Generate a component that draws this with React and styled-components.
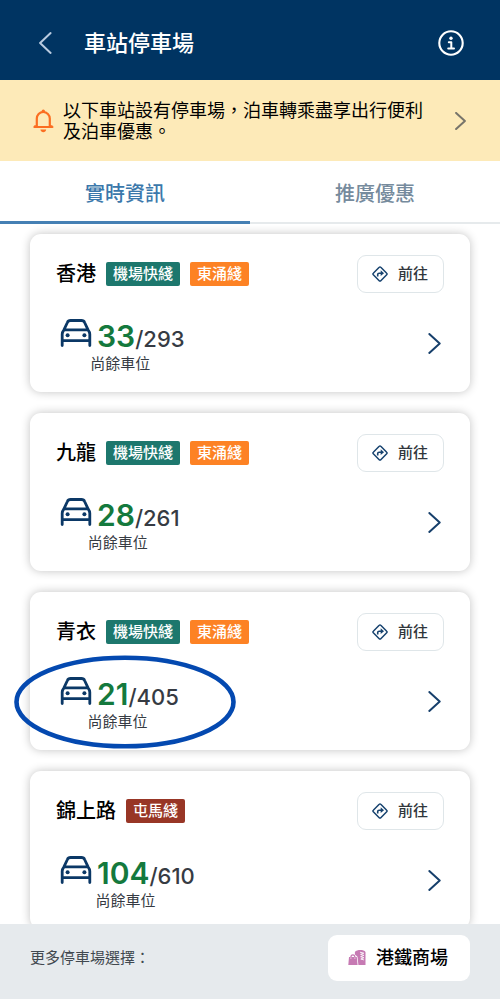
import React from "react";
import styled, { createGlobalStyle } from "styled-components";

const GlobalStyle = createGlobalStyle`
  *, *::before, *::after { box-sizing: border-box; }
  body {
    margin: 0;
    background: #ffffff;
    color: #000000;
    font-family: Inter, "Noto Sans CJK TC", sans-serif;
  }
  button {
    font: inherit;
    color: inherit;
    border: 0;
    background: none;
    padding: 0;
    margin: 0;
    cursor: pointer;
  }
  svg { display: block; flex: none; }
`;

const Screen = styled.div`
  height: 100vh;
  display: flex;
  flex-direction: column;
  overflow: hidden;
`;

const Header = styled.header`
  flex: none;
  display: flex;
  align-items: center;
  height: 80px;
  padding: 6px 36px 0 38px;
  background: #003462;
  color: #ffffff;
`;

const Title = styled.h1`
  flex: 1;
  margin: 0 0 0 32px;
  font-size: 22px;
  line-height: 32px;
  font-weight: 500;
`;

const IconButton = styled.button`
  display: grid;
  place-items: center;
`;

const DetailButton = styled(IconButton)`
  height: 48px;
`;

const Notice = styled.button`
  && {
    flex: none;
    display: flex;
    align-items: center;
    gap: 8px;
    height: 81px;
    padding: 0 34px 0 32px;
    background: #fdeab8;
    text-align: left;
  }
`;

const NoticeText = styled.span`
  flex: 1;
  font-size: 18px;
  line-height: 21px;
  white-space: pre-line;
`;

const Tabs = styled.div`
  flex: none;
  display: grid;
  grid-template-columns: 1fr 1fr;
  height: 63px;
`;

const Tab = styled.button`
  && {
    padding-top: 5px;
    font-size: 20px;
    line-height: 28px;
    font-weight: 500;
    color: ${(p) => (p.$active ? "#3b78ab" : "#768b9d")};
    border-bottom: ${(p) => (p.$active ? "3px solid #4580b4" : "2px solid #e6eaec")};
  }
`;

const List = styled.main`
  flex: 1;
  min-height: 0;
  display: flex;
  flex-direction: column;
  gap: 21px;
  padding: 10px 30px 0;
  overflow: hidden;
`;

const Card = styled.article`
  position: relative;
  flex: none;
  padding: 21px 26px 20px;
  border-radius: 11px;
  background: #ffffff;
  box-shadow: 0 0 10px rgba(0, 0, 0, 0.24);
`;

const CardHead = styled.div`
  display: flex;
  align-items: center;
  gap: 10px;
`;

const Station = styled.h2`
  margin: 0;
  font-size: 20px;
  line-height: 28px;
  font-weight: 500;
`;

const LineBadge = styled.span`
  height: 24px;
  padding: 0 7px;
  border-radius: 2px;
  background: ${(p) => p.$color};
  color: #ffffff;
  font-size: 15px;
  line-height: 24px;
  font-weight: 500;
`;

const GoButton = styled.button`
  && {
    display: flex;
    align-items: center;
    gap: 10px;
    height: 38px;
    margin-left: auto;
    padding: 0 15px 0 14px;
    border: 1px solid #dfe6e9;
    border-radius: 9px;
    color: #30363c;
    font-size: 15px;
    line-height: 20px;
    font-weight: 500;
  }
`;

const CardBody = styled.div`
  display: flex;
  align-items: flex-start;
  justify-content: space-between;
  margin-top: 26px;
  padding-right: 3px;
`;

const Availability = styled.div`
  display: flex;
  flex-direction: column;
  align-items: center;
  color: #363b43;
`;

const CountRow = styled.div`
  display: flex;
  align-items: baseline;
  padding-left: 4px;
  line-height: 34px;
`;

const CarIcon = styled.svg`
  margin-right: 5px;
`;

const Free = styled.strong`
  color: #14793d;
  font-size: 30px;
  font-weight: 600;
`;

const Total = styled.span`
  font-size: 22px;
  font-weight: 500;
`;

const CountLabel = styled.span`
  font-size: 15px;
  line-height: 16px;
`;

const Highlight = styled.svg`
  position: absolute;
  z-index: 1;
  left: -16px;
  top: 63px;
  pointer-events: none;
`;

const Footer = styled.footer`
  flex: none;
  display: flex;
  align-items: center;
  justify-content: space-between;
  height: 75px;
  padding: 0 30px 8px;
  background: #e6eaed;
  color: #41484f;
  font-size: 15px;
  line-height: 20px;
`;

const MallButton = styled.button`
  && {
    display: flex;
    align-items: center;
    gap: 10px;
    height: 46px;
    padding: 0 22px 0 20px;
    border-radius: 9px;
    background: #ffffff;
    color: #000000;
    font-size: 18px;
    font-weight: 500;
  }
`;

const Chevron = ({ width, height, color, stroke = 2, left = false }) => (
  <svg width={width} height={height} viewBox="0 0 10 20" preserveAspectRatio="none" fill="none" aria-hidden="true">
    <path
      d={left ? "M9 1 1.5 10 9 19" : "M1 1 9 10 1 19"}
      stroke={color}
      strokeWidth={stroke}
      strokeLinecap="round"
      strokeLinejoin="round"
      vectorEffect="non-scaling-stroke"
    />
  </svg>
);

const InfoIcon = () => (
  <svg width="26" height="26" viewBox="0 0 26 26" fill="none" aria-hidden="true">
    <circle cx="13" cy="13" r="11.7" stroke="#fff" strokeWidth="2.1" />
    <circle cx="13" cy="8.2" r="1.7" fill="#fff" />
    <path d="M10.8 12.2h2.5v6M10.2 18.4h5.8" stroke="#fff" strokeWidth="2" strokeLinecap="round" strokeLinejoin="round" />
  </svg>
);

const BellIcon = () => (
  <svg width="23" height="24" viewBox="0 0 23 24" fill="none" aria-hidden="true">
    <path d="M3 17.3h1.8V9.6c0-3.7 2.7-6.6 6.4-6.6s6.6 2.9 6.6 6.6v7.7h1.9M2.4 18h18" stroke="#fb6e21" strokeWidth="2.2" strokeLinecap="round" strokeLinejoin="round" />
    <circle cx="11.3" cy="2.2" r="1.7" fill="#fb6e21" />
    <path d="M8.4 20.4h5.8c-.3 1.8-1.5 2.8-2.9 2.8s-2.6-1-2.9-2.8Z" fill="#fb6e21" />
  </svg>
);

const Car = () => (
  <CarIcon width="32" height="28" viewBox="0 0 32 28" fill="none" aria-hidden="true">
    <path
      d="M2.2 26.5V15.2c0-1.6.6-2.7 1.6-4L7.400 3.500C8 2 9 1.500 10.500 1.500h11c1.500 0 2.500.5 3.100 2l3.600 7.700c1 1.300 1.600 2.400 1.600 4v11.300M2.600 21.600h26.800M4 10.900h24"
      stroke="#0b3866"
      strokeWidth="2.8"
      strokeLinecap="round"
      strokeLinejoin="round"
    />
    <circle cx="7.6" cy="16.200" r="2" fill="#0b3866" />
    <circle cx="24.4" cy="16.200" r="2" fill="#0b3866" />
  </CarIcon>
);

const DirectionIcon = () => (
  <svg width="16" height="16" viewBox="0 0 16 16" fill="none" aria-hidden="true">
    <path d="M7.2 1.3a1.1 1.1 0 0 1 1.6 0l5.9 5.9a1.1 1.1 0 0 1 0 1.6l-5.9 5.9a1.1 1.1 0 0 1-1.6 0L1.3 8.8a1.1 1.1 0 0 1 0-1.6Z" stroke="#17436f" strokeWidth="1.5" />
    <path d="M5.7 10.4V8.6c0-.9.5-1.4 1.4-1.4h2.4" stroke="#17436f" strokeWidth="1.6" />
    <path d="M8.7 4.3 12 7.2 8.7 10.1Z" fill="#17436f" />
  </svg>
);

const MallIcon = () => (
  <svg width="18" height="17" viewBox="0 0 18 17" fill="none" aria-hidden="true">
    <path d="M6.9 3C7.8 1.5 10.3 1 12.4 1s4.3.6 5.1 1.900V16H10.400L9.500 7.800 6.900 5.600Z" fill="#c67ab3" />
    <path d="M12 3.200l3.800 1-3.200 1.200 3.300 1-3.300 1.300 3.300 1-3.100 1.300 3.100.9" stroke="#fff" strokeWidth=".9" />
    <path d="M1 8H8.800L9.600 16H.3Z" fill="#c67ab3" />
    <path d="M2.900 8.400C2.900 5.100 6.900 5.100 6.900 8.400" stroke="#c67ab3" strokeWidth="1.2" />
    <path d="M2.900 8.400v1.500M6.900 8.400v1.500" stroke="#fff" strokeWidth=".6" />
  </svg>
);

const LINES = {
  機場快綫: "#1d776d",
  東涌綫: "#fd8224",
  屯馬綫: "#983626",
};

const CAR_PARKS = [
  { name: "香港", lines: ["機場快綫", "東涌綫"], free: 33, total: 293 },
  { name: "九龍", lines: ["機場快綫", "東涌綫"], free: 28, total: 261 },
  { name: "青衣", lines: ["機場快綫", "東涌綫"], free: 21, total: 405, highlighted: true },
  { name: "錦上路", lines: ["屯馬綫"], free: 104, total: 610 },
];

function CarParkCard({ name, lines, free, total, highlighted }) {
  return (
    <Card>
      <CardHead>
        <Station>{name}</Station>
        {lines.map((line) => (
          <LineBadge key={line} $color={LINES[line]}>{line}</LineBadge>
        ))}
        <GoButton type="button">
          <DirectionIcon />
          前往
        </GoButton>
      </CardHead>
      <CardBody>
        <Availability>
          <CountRow>
            <Car />
            <Free>{free}</Free>
            <Total>/{total}</Total>
          </CountRow>
          <CountLabel>尚餘車位</CountLabel>
        </Availability>
        <DetailButton type="button" aria-label={name}>
          <Chevron width={13} height={21} color="#163f6b" />
        </DetailButton>
      </CardBody>
      {highlighted && (
        <Highlight width="222" height="94" viewBox="0 0 222 94" fill="none" aria-hidden="true">
          <ellipse cx="111" cy="47" rx="108.5" ry="44.3" stroke="#0449b0" strokeWidth="4.6" />
        </Highlight>
      )}
    </Card>
  );
}

export default function App() {
  return (
    <>
      <GlobalStyle />
      <Screen>
        <Header>
          <IconButton type="button" aria-label="返回">
            <Chevron width={14} height={22} color="#b9cbe0" left />
          </IconButton>
          <Title>車站停車場</Title>
          <IconButton type="button" aria-label="資訊">
            <InfoIcon />
          </IconButton>
        </Header>
        <Notice type="button">
          <BellIcon />
          <NoticeText>{"以下車站設有停車場，泊車轉乘盡享出行便利\n及泊車優惠。"}</NoticeText>
          <Chevron width={11} height={18} color="#77746a" />
        </Notice>
        <Tabs role="tablist">
          <Tab type="button" role="tab" aria-selected="true" $active>實時資訊</Tab>
          <Tab type="button" role="tab" aria-selected="false">推廣優惠</Tab>
        </Tabs>
        <List>
          {CAR_PARKS.map((park) => (
            <CarParkCard key={park.name} {...park} />
          ))}
        </List>
        <Footer>
          <span>更多停車場選擇：</span>
          <MallButton type="button">
            <MallIcon />
            港鐵商場
          </MallButton>
        </Footer>
      </Screen>
    </>
  );
}
